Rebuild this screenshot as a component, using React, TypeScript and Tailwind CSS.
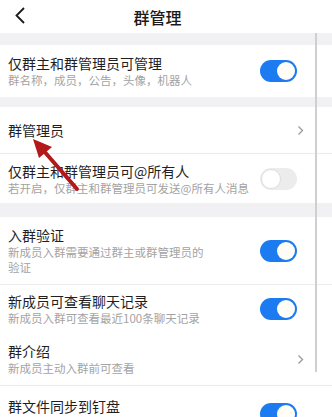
import React from "react";

const font = { fontFamily: '"Noto Sans CJK SC", "Noto Sans", sans-serif' };

function Toggle({ on }: { on: boolean }) {
  return on ? (
    <div className="w-[37px] h-[22px] rounded-full bg-[#1d7bf1] flex items-center justify-end pr-[2px] shrink-0">
      <div className="w-[18px] h-[18px] rounded-full bg-[#fffdf6]" />
    </div>
  ) : (
    <div className="w-[37px] h-[22px] rounded-full bg-[#ececec] flex items-center justify-start pl-[1px] shrink-0">
      <div className="w-[20px] h-[20px] rounded-full bg-white border border-[#dedede]" />
    </div>
  );
}

function Chevron() {
  return (
    <svg width="7" height="11" viewBox="0 0 7 11" className="shrink-0">
      <path d="M1.5 1.5 L5.5 5.5 L1.5 9.5" fill="none" stroke="#9a9a9a" strokeWidth="1.3" />
    </svg>
  );
}

function Row({
  title,
  sub,
  right,
  h,
  narrow,
}: {
  title: string;
  sub?: string;
  right: "on" | "off" | "arrow";
  h: string;
  narrow?: boolean;
}) {
  return (
    <div className={`${h} bg-white flex items-center justify-between pl-[8px]`}>
      <div className="flex flex-col gap-[1px]">
        <div className="text-[14px] leading-[18px] text-[#1f1f1f] whitespace-nowrap">{title}</div>
        {sub && (
          <div
            className={`text-[11.5px] leading-[15px] text-[#a3a3a3] ${
              narrow ? "w-[200px]" : "whitespace-nowrap"
            }`}
          >
            {sub}
          </div>
        )}
      </div>
      {right === "arrow" ? (
        <div className="pr-[28px]">
          <Chevron />
        </div>
      ) : (
        <div className="pr-[35px]">
          <Toggle on={right === "on"} />
        </div>
      )}
    </div>
  );
}

export default function App() {
  return (
    <div className="relative w-[332px] h-[417px] overflow-hidden bg-white" style={font}>
      <div className="relative h-[33px] flex items-center justify-center pr-[17px] bg-white">
        <svg width="12" height="17" viewBox="0 0 12 17" className="absolute left-[14px] top-[7px]">
          <path d="M10 1 L2.5 8.5 L10 16" fill="none" stroke="#1a1a1a" strokeWidth="1.8" />
        </svg>
        <div className="text-[16px] leading-[20px] font-medium text-[#1a1a1a]">群管理</div>
      </div>
      <div className="h-[12px] bg-[#f1f1f3]" />
      <Row h="h-[52px]" title="仅群主和群管理员可管理" sub="群名称，成员，公告，头像，机器人" right="on" />
      <div className="h-[10px] bg-[#f1f1f3]" />
      <Row h="h-[46px]" title="群管理员" right="arrow" />
      <div className="h-px bg-[#ececec]" />
      <Row
        h="h-[49px]"
        title="仅群主和群管理员可@所有人"
        sub="若开启，仅群主和群管理员可发送@所有人消息"
        right="off"
      />
      <div className="h-[14px] bg-[#f1f1f3]" />
      <Row h="h-[67px]" title="入群验证" sub="新成员入群需要通过群主或群管理员的验证" right="on" narrow />
      <div className="h-px bg-[#ececec]" />
      <Row h="h-[48px]" title="新成员可查看聊天记录" sub="新成员入群可查看最近100条聊天记录" right="on" />
      <Row h="h-[52px]" title="群介绍" sub="新成员主动入群前可查看" right="arrow" />
      <div className="h-px bg-[#ececec]" />
      <Row h="h-[56px]" title="群文件同步到钉盘" sub="群文件将自动同步到钉盘" right="on" />

      <div className="absolute left-[315px] top-[33px] w-[2px] h-[339px] bg-[#cfcfcf]" />

      <svg width="332" height="417" className="absolute left-0 top-0 pointer-events-none">
        <line x1="77" y1="189" x2="43" y2="150" stroke="#b3181b" strokeWidth="4" strokeLinecap="round" />
        <polygon points="33,139 52,147 39,158" fill="#b3181b" />
      </svg>
    </div>
  );
}
